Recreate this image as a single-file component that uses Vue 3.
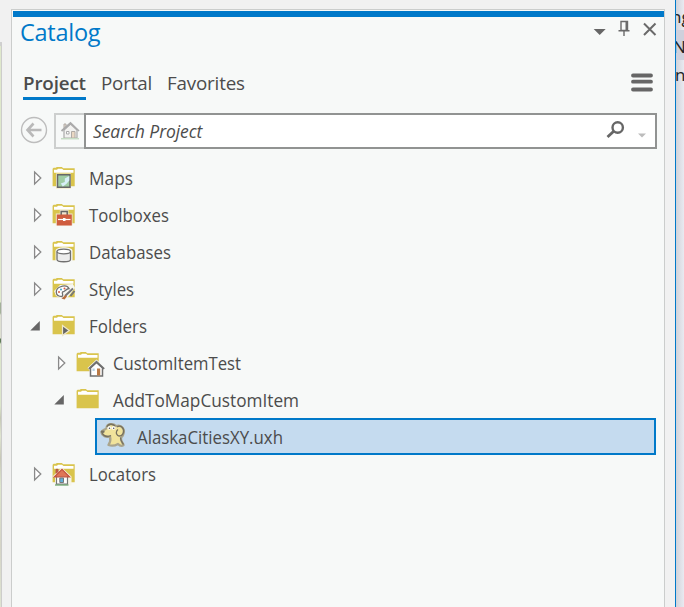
<script setup>
const rows = [
  { label: 'Maps', icon: 'maps', depth: 0, width: 44 },
  { label: 'Toolboxes', icon: 'toolboxes', depth: 0, width: 80 },
  { label: 'Databases', icon: 'databases', depth: 0, width: 82 },
  { label: 'Styles', icon: 'styles', depth: 0, width: 45 },
  { label: 'Folders', icon: 'folders', depth: 0, open: true, width: 58 },
  { label: 'CustomItemTest', icon: 'home', depth: 1, width: 128 },
  { label: 'AddToMapCustomItem', icon: 'folder', depth: 1, open: true, width: 186 },
  { label: 'AlaskaCitiesXY.uxh', icon: 'item', depth: 2, selected: true, width: 146 },
  { label: 'Locators', icon: 'locators', depth: 0, width: 67 },
]
const menuLines = ['ng', 'N', 'n']
</script>

<template>
  <div class="window">
    <div class="map-edge"><div class="map"></div></div>
    <section class="panel">
      <div class="accent"></div>
      <header class="title-bar">
        <h1>Catalog</h1>
        <svg class="window-tools" width="70" height="26" viewBox="0 0 70 26">
          <path d="M.7 12h12l-6 6z" fill="#666" />
          <g fill="none" stroke="#6a6a6a" stroke-width="1.4">
            <path d="M28 4.5h6.500v9h-6.500zM25.500 13.700h11M31 14v5" />
            <path d="M33.500 4v9" stroke-width="2" />
            <path d="M51 6.500l11.500 11.500M62.500 6.500l-11.500 11.500" stroke-width="2" />
          </g>
        </svg>
      </header>
      <nav class="tabs">
        <span class="tab active">Project</span>
        <span class="tab portal">Portal</span>
        <span class="tab favorites">Favorites</span>
        <svg class="menu" width="22" height="20" viewBox="0 0 22 20">
          <path d="M2 2.500h18M2 8.700h18M2 16.500h18" stroke="#666" stroke-width="3.800" stroke-linecap="round" />
        </svg>
      </nav>
      <div class="search-row">
        <svg class="back" width="28" height="36" viewBox="0 0 28 36">
          <circle cx="14" cy="17" r="12.500" fill="none" stroke="#bdbdbd" stroke-width="1.400" />
          <path d="M21.500 17H8M13.500 10.500L7.500 17l6 6.500" fill="none" stroke="#b9b9b9" stroke-width="2.600" />
        </svg>
        <div class="home-button">
          <svg width="20" height="20" viewBox="0 0 20 20">
            <path d="M4 9v8h13V9l-6.500-6z" fill="#f2f2f0" stroke="#aaa" stroke-width="1.200" />
            <path d="M4 8V3h2v4" fill="#e8ddd0" stroke="#b0aaa5" />
            <path d="M1.500 10l9-8 8.500 8" fill="none" stroke="#aaa" stroke-width="1.700" />
            <path d="M11.500 10.500h3.500V17h-3.500z" fill="#ead8c3" stroke="#b0aaa5" />
            <path d="M6.500 10.500h2.500v2.500H6.500z" fill="#fff" stroke="#aaa" />
            <path d="M1 17.700h18" stroke="#c6dcc4" stroke-width="1.500" />
          </svg>
        </div>
        <div class="search-box">
          <span class="placeholder">Search Project</span>
          <svg width="50" height="32" viewBox="0 0 50 32">
            <circle cx="12.700" cy="12.500" r="5.200" fill="none" stroke="#666" stroke-width="2.400" />
            <path d="M9 16l-6.500 6" stroke="#666" stroke-width="2.800" />
            <path d="M33 18.500h8l-4 4z" fill="#bcbcbc" />
          </svg>
        </div>
      </div>
      <div class="tree">
        <div v-for="row in rows" :key="row.label" class="row" :class="['depth-' + row.depth, { selected: row.selected }]">
          <svg v-if="!row.selected" class="toggle" width="14" height="37" viewBox="0 0 14 37">
            <path v-if="row.open" d="M9.800 14v9.500H.3z" fill="#666" />
            <path v-else d="M4.600 13v12l6.200-6z" fill="#fff" stroke="#8a8a8a" stroke-width="1.300" />
          </svg>
          <svg class="icon" width="30" height="37" viewBox="0 0 30 37">
            <g v-if="row.icon !== 'item'">
              <path d="M.6 27.300V9.700l1-.9h2.200l1-.8h5l1.500 1.200h11.400v18.100z" fill="#d9c44c" />
              <path d="M2 13.700V10.800h3l1-1h4l1.500 1.200h10v2.700z" fill="#fff" />
            </g>
            <g v-if="row.icon === 'maps'">
              <path d="M4 14.500h15V30H4z" fill="#f4f0d5" />
              <path d="M5.500 15.700h12.500v12.500H5.500z" fill="#9fcca3" stroke="#676767" stroke-width="1.500" />
              <path d="M17.300 17l-4.500 2.500v3.500l-4 1.500 2 3 3.500-2.500 3-3.500z" fill="#d7eff6" />
            </g>
            <g v-if="row.icon === 'toolboxes'">
              <path d="M3.800 17.500h4V14h8.700v3.500h4v12H3.800z" fill="#efe5cf" />
              <path d="M9.200 19v-3.500h6V19" fill="none" stroke="#666" stroke-width="1.500" />
              <path d="M4.800 18.500h15v11h-15z" fill="#cf5d3f" />
              <path d="M6 23.500h12.500" stroke="#fff" stroke-width="1.200" />
              <path d="M11 22h2.500v3H11z" fill="#fff" />
            </g>
            <g v-if="row.icon === 'databases'">
              <path d="M3.500 18c0-5 17-5 17 0v9c0 4-17 4-17 0z" fill="#f7f8f5" />
              <path d="M5 18.500v8c0 3 13.500 3 13.500 0v-8" fill="#ececec" stroke="#707070" stroke-width="1.300" />
              <ellipse cx="11.750" cy="18.500" rx="6.750" ry="2.300" fill="#fff" stroke="#707070" stroke-width="1.300" />
            </g>
            <g v-if="row.icon === 'styles'">
              <path d="M2 21l6-6 13-1 2 4-7 9-3 3-4-2-5-2z" fill="#f7f7f1" />
              <path d="M10 26.500c-7.500 0-7-7.500-2-9.500 5-2 8-.5 9 1.500-3 0-3.500 3-6.500 3.500-1 2 1.500 2.500-.5 4.500z" fill="#fff" stroke="#707070" stroke-width="1.300" />
              <circle cx="7" cy="22" r="1" fill="#d65b42" /><circle cx="9" cy="19.500" r="1" fill="#41a4c8" /><circle cx="12.500" cy="18.500" r="1" fill="#d65b42" />
              <path d="M13 26l8-7.500M18.500 26l4-5" stroke="#777" stroke-width="2" />
              <path d="M13.500 25l-4 3.500 3 1 2.500-3z" fill="#b86f3e" />
            </g>
            <path v-if="row.icon === 'folders'" d="M10.500 18.500v10l6.700-5z" fill="#666" stroke="#eee7cb" stroke-width="1.200" />
            <g v-if="row.icon === 'home'">
              <path d="M11.500 24l9-8.500 9 8.500-2 2v7.500h-14V26z" fill="#f7f8f5" />
              <path d="M14.500 24V32h12v-8L20.500 18.500z" fill="#fff" stroke="#707070" stroke-width="1.500" />
              <path d="M12.800 24.800l7.700-7 7.700 7" fill="none" stroke="#707070" stroke-width="1.800" />
              <path d="M21 24.500h3.200v7H21z" fill="#b97945" />
              <path d="M16.500 24.500h2.200V27h-2.200z" fill="#b9d2e2" />
            </g>
            <g v-if="row.icon === 'locators'">
              <path d="M.5 21.500l9.300-9 9.700 9v9H3v-8z" fill="#f7f5e8" />
              <path d="M4.500 20.500h11v8.700h-11z" fill="#fff" stroke="#777" stroke-width="1.200" />
              <path d="M4 18.500V14.300h2v3" fill="#cc5e49" stroke="#a55347" stroke-width=".8" />
              <path d="M2.500 21.800l7.500-7.500 7.500 7.500z" fill="#df7657" stroke="#c4543f" stroke-width="1.300" />
              <path d="M7.800 23h3.700v4.500H7.800z" fill="#62afd9" stroke="#777" />
              <path d="M3 30h13.500" stroke="#71a974" stroke-width="1.300" />
            </g>
            <g v-if="row.icon === 'item'" stroke-linejoin="round">
              <path d="M1.500 14.500C1.500 12 6.500 11.500 6.500 10 7 5.500 13 5 16 8c6-2 9.500 4 7 9-.7 1.700-2.200 2-2 4 .2 3 2 4 2.500 6-2 1.700-3.500 1-5.500-1-3 1.700-7 2-9.500 1 2-3 2.300-5.500 1.500-8.500-4 .8-8-.5-8.500-4z" fill="#f1e39b" stroke="#aaa58d" stroke-width="2.300" />
              <path d="M2 15.200c2.500 4 6.500 3.500 9 2.300M7 9C8 5.500 13 5.500 15 8M17 9c4-2.500 7.500 1.500 6.500 5.500-.8 3-3.800 4.500-6 2.700-2-1.500-1.200-4.500.5-5.700M20.500 19.500c0 4 2 5 3 7" fill="none" stroke="#77715e" stroke-width="1.300" />
              <ellipse cx="9.300" cy="10" rx="2" ry="1.700" fill="#fff" /><ellipse cx="13.500" cy="10" rx="2" ry="1.700" fill="#fff" />
              <circle cx="9.500" cy="10.200" r=".8" fill="#555" /><circle cx="13.700" cy="10.200" r=".8" fill="#555" />
              <ellipse cx="2.700" cy="13.700" rx="2" ry="1.300" fill="#777260" />
            </g>
          </svg>
          <svg class="label" :width="row.width + 4" height="37">
            <text x="0" y="26" :textLength="row.width" lengthAdjust="spacingAndGlyphs">{{ row.label }}</text>
          </svg>
        </div>
      </div>
    </section>
    <aside class="side-list">
      <div v-for="(line, i) in menuLines" :key="line" class="side-line" :class="{ hot: i === 1, last: i === 2 }"><span>{{ line }}</span></div>
    </aside>
  </div>
</template>

<style>
body { overflow: hidden; }
</style>

<style scoped>
.window { display: flex; width: 684px; height: 607px; overflow: hidden; background: #f1f1f1; font-family: "Open Sans", "Noto Sans", sans-serif; color: #4c4c4c; box-sizing: border-box; }
.map-edge { width: 2px; margin-right: 9px; padding-top: 42px; box-sizing: border-box; flex: none; }
.map { height: 565px; border-top: 4px solid #d0d0d0; border-right: 1px solid #cdcdcb; box-sizing: border-box; background: linear-gradient(#dfe8cc 0 256px, #a4b19a 257px 267px, #dedfd2 269px 292px, #607b59 293px 296px, #dce5cb 298px 360px, #c6c8b5 372px, #e0e5d1 390px, #c8c8b8 412px, #dee5ce 440px, #d5d4c7 500px, #dfe4d2); }
.panel { width: 654px; height: 598px; margin-top: 9px; padding: 1px 0 0 1px; box-sizing: border-box; border: 1px solid #cbcdcc; border-bottom: 0; background: #f7f9f8; flex: none; }
.accent { height: 6px; background: #0079c9; }
.title-bar { display: flex; justify-content: space-between; height: 50px; padding: 0 1px 0 7px; }
h1 { margin: 0; font-size: 23.500px; line-height: 31px; font-weight: 400; color: #0079c9; letter-spacing: -.25px; }
.window-tools { margin-top: 0; }
.tabs { display: flex; height: 33px; padding: 0 11px 0 10px; font-size: 18.800px; line-height: 32px; }
.tab { height: 30px; box-sizing: content-box; white-space: nowrap; letter-spacing: -.18px; }
.active { width: 63px; border-bottom: 3px solid #0079c9; font-weight: 600; letter-spacing: -.15px; }
.portal { width: 51px; margin-left: 15px; }
.favorites { margin-left: 15px; }
.menu { margin: 6px 0 0 auto; }
.search-row { display: flex; height: 36px; margin-top: 13px; padding: 0 7px; }
.back { flex: none; margin-right: 6px; }
.home-button { display: flex; align-items: center; justify-content: center; width: 30px; box-sizing: border-box; border: 2px solid #cdcfce; border-right: 0; flex: none; }
.search-box { display: flex; align-items: center; justify-content: space-between; width: 573px; box-sizing: border-box; border: 2px solid #919392; padding-left: 7px; background: #fff; flex: none; }
.placeholder { font-size: 17.500px; font-style: italic; line-height: 32px; letter-spacing: -.08px; }
.tree { margin-top: 10px; padding-right: 8px; }
.row { display: flex; height: 37px; }
.depth-0 { padding-left: 17px; }
.depth-1 { padding-left: 41px; }
.toggle { flex: none; margin-right: 8px; }
.icon { flex: none; margin-right: 7px; overflow: visible; }
.label { overflow: visible; font-size: 17.800px; fill: #4c4c4c; }
.selected { margin-left: 82px; padding-left: 3px; border: 2px solid #0079c9; background: #c5dbef; box-sizing: border-box; }
.selected svg { margin-top: -2px; }
.side-list { width: 9px; margin-left: 10px; box-sizing: border-box; border-left: 1px solid #0079c9; background: linear-gradient(90deg, #d2d3d9, #e9eaf1); flex: none; overflow: hidden; }
.side-line { height: 30px; font-size: 17px; line-height: 34px; color: #222; display: flex; white-space: nowrap; }
.side-line span { margin-left: -5px; }
.side-line.hot span { margin-left: -3px; }
.side-line.last { line-height: 29px; }
.side-line.last span { margin-left: -1px; }
.hot { background: #cfd0dc; }
</style>
